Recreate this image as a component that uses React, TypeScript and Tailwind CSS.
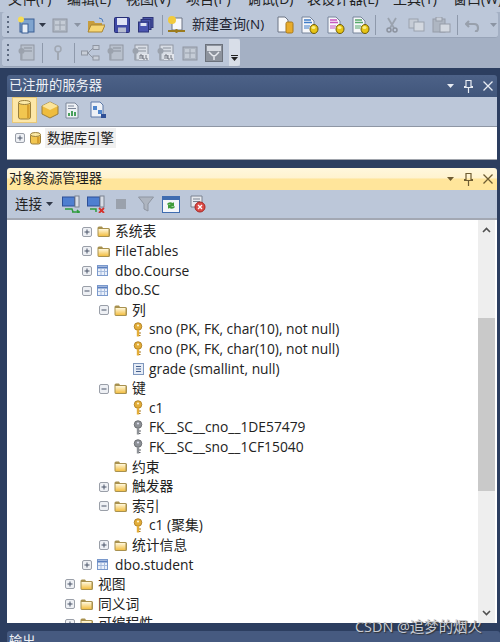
import type { ReactNode } from 'react'

const uiFont = { fontFamily: '"Open Sans", "Noto Sans CJK SC", sans-serif' }

function Svg({ w = 18, h = 18, className = '', children }: { w?: number; h?: number; className?: string; children: ReactNode }) {
  return (
    <svg width={w} height={h} viewBox={`0 0 ${w} ${h}`} className={`shrink-0 ${className}`}>
      {children}
    </svg>
  )
}

function PlusBox({ minus = false }: { minus?: boolean }) {
  return (
    <Svg w={10} h={10}>
      <rect x="0.500" y="0.500" width="9" height="9" rx="1.500" fill="#eef0f4" stroke="#9a9fa8" />
      <path d="M2.500 5h5" stroke="#4a5568" strokeWidth="1" />
      {!minus && <path d="M5 2.500v5" stroke="#4a5568" strokeWidth="1" />}
    </Svg>
  )
}

function Folder() {
  return (
    <Svg w={13} h={11}>
      <defs>
        <linearGradient id="folderFill" x1="0" y1="0" x2="0" y2="1">
          <stop offset="0" stopColor="#fff8dc" />
          <stop offset="1" stopColor="#f3bf45" />
        </linearGradient>
      </defs>
      <path d="M0.500 2q0-1.500 1.500-1.500h3l1 1.500h5.500q1.500 0 1.500 1.500v6q0 1.500-1.500 1.500h-9q-2 0-2-1.500z" fill="#a8914f" />
      <rect x="1.500" y="3" width="10" height="7" fill="url(#folderFill)" />
    </Svg>
  )
}

function TableIcon() {
  return (
    <Svg w={11} h={11}>
      <rect x="0.500" y="0.500" width="10" height="10" fill="#eaf0fa" stroke="#7a99cc" />
      <path d="M0.500 2.500h10" stroke="#5b7fbe" strokeWidth="2" />
      <path d="M4 3.500v6.500M7.500 3.500v6.500M1 6.500h9" stroke="#a6bbdd" />
    </Svg>
  )
}

function ColumnIcon() {
  return (
    <Svg w={11} h={12}>
      <rect x="0.500" y="0.500" width="10" height="11" fill="#e6ecf6" stroke="#7f97bd" />
      <path d="M3 3.500h5M3 6h5M3 8.500h5" stroke="#46618f" />
    </Svg>
  )
}

function Key({ gray = false }: { gray?: boolean }) {
  const fill = gray ? '#8d9196' : '#e3ad38'
  const dark = gray ? '#5e6166' : '#a7771c'
  return (
    <Svg w={10} h={16}>
      <circle cx="5" cy="4.500" r="3.800" fill={fill} stroke={dark} strokeWidth="0.800" />
      <circle cx="5" cy="3.500" r="1.100" fill={gray ? '#dde' : '#fff3c8'} />
      <path d="M5 8v6.500" stroke={fill} strokeWidth="2.400" />
      <path d="M6 11h2M6 13.500h1.500" stroke={dark} />
    </Svg>
  )
}

function Cylinder({ w = 12, h = 14 }: { w?: number; h?: number }) {
  return (
    <Svg w={w} h={h}>
      <rect x="0.500" y="2" width={w - 1} height={h - 3} rx="2" fill="#f2c650" stroke="#9a7f3c" />
      <ellipse cx={w / 2} cy="2.500" rx={w / 2 - 0.500} ry="2" fill="#fbe9a6" stroke="#9a7f3c" />
      <rect x={w - 4} y="5" width="2.500" height={h - 7} fill="#d79f2e" />
    </Svg>
  )
}

function Coin() {
  return (
    <>
      <ellipse cx="14" cy="13" rx="4" ry="4.500" fill="#e7c414" stroke="#6f5c08" />
      <ellipse cx="13.500" cy="11.500" rx="2" ry="1.500" fill="#fbef84" />
    </>
  )
}

function DocCoin({ color }: { color: string }) {
  return (
    <Svg w={19} h={18}>
      <path d="M2 1h8l4 4v12H2z" fill="#f6f7fa" stroke="#77849a" />
      <path d="M4 4h7M4 6.500h8" stroke={color} strokeWidth="1.500" />
      <path d="M4 10h6M4 12h5" stroke={color} />
      <Coin />
    </Svg>
  )
}

function DropArrow({ color = '#303848' }: { color?: string }) {
  return (
    <Svg w={7} h={4}>
      <path d="M0 0h7L3.500 4z" fill={color} />
    </Svg>
  )
}

function Grip() {
  return (
    <div className="flex w-[2px] flex-col gap-[3px]">
      {[0, 1, 2, 3].map(i => (
        <div key={i} className="h-[2px] w-[2px] bg-[#5d6a80]" />
      ))}
    </div>
  )
}

function Sep() {
  return <div className="h-[20px] w-[1px] bg-[#8e99ab]" />
}

function GrayBox({ w = 18 }: { w?: number }) {
  return (
    <Svg w={w} h={18}>
      <rect x="2" y="3" width={w - 4} height="13" fill="#aeb6c2" stroke="#8f96a2" />
      <rect x="4" y="5" width={w - 8} height="9" fill="#c5ccd6" />
      <path d={`M4 9h${w - 8}M${w / 2} 5v9`} stroke="#98a0ac" />
    </Svg>
  )
}

function GrayKeyDoc({ label }: { label?: boolean }) {
  return (
    <Svg w={19} h={18}>
      <rect x="4" y="1" width="13" height="15" fill={label ? '#d8dde5' : '#b8c0cc'} stroke="#8f96a2" />
      <path d="M7 4h8M7 7h8" stroke="#8a919c" />
      <circle cx="4.500" cy="7" r="3" fill="#9ba2ad" />
      <path d="M4.500 10v6" stroke="#9ba2ad" strokeWidth="2" />
      {label && <rect x="8" y="10" width="10" height="6" fill="#e3e6ec" />}
      {label && <path d="M9 15v-4h2v4M12 11v4h2M15 11v4h2" stroke="#555c68" fill="none" strokeWidth="0.800" />}
    </Svg>
  )
}

function Toolbars() {
  return (
    <div className="bg-[#a4b0c4]">
      <div className="mx-[2px] flex h-[26px] items-center rounded-[3px] border-b border-[#98a4b8] bg-[#bcc7d9] pl-[5px]">
        <Grip />
        <Svg w={18} h={18} className="ml-[8px]">
          <rect x="3" y="3" width="14" height="13" fill="#7fa4cf" stroke="#3b5f94" />
          <rect x="5" y="8" width="6" height="9" fill="#e8eef6" stroke="#3b5f94" />
          <circle cx="4" cy="3.500" r="3" fill="#f6dc55" />
        </Svg>
        <div className="ml-[4px]"><DropArrow /></div>
        <div className="ml-[5px]"><GrayBox /></div>
        <div className="ml-[5px]"><DropArrow color="#8b94a3" /></div>
        <Svg w={18} h={16} className="ml-[6px]">
          <path d="M1 4h6l1 2h7v9H1z" fill="#c79d3d" />
          <path d="M4 8h14l-3 7H1z" fill="#f7d774" stroke="#a98532" />
          <path d="M12 1q4 0 4 4" stroke="#4d7cbd" fill="none" />
        </Svg>
        <Svg w={16} h={16} className="ml-[9px]">
          <rect x="0.500" y="0.500" width="15" height="15" rx="1" fill="#3f49a6" stroke="#262e75" />
          <rect x="3" y="1" width="10" height="7" fill="#dfe3f5" />
          <rect x="4" y="10.500" width="8" height="5" fill="#b6bcd0" />
        </Svg>
        <Svg w={16} h={16} className="ml-[8px]">
          <rect x="5" y="0.500" width="10" height="10" fill="#4a54a8" stroke="#2c3478" />
          <rect x="3" y="2.500" width="10" height="10" fill="#4a54a8" stroke="#2c3478" />
          <rect x="0.500" y="5" width="10" height="10" fill="#4a54b0" stroke="#2c3478" />
          <rect x="2.500" y="6" width="6" height="3" fill="#dfe3f5" />
        </Svg>
        <div className="ml-[8px]"><Sep /></div>
        <Svg w={19} h={19} className="ml-[4px]">
          <path d="M5 3h10v12H5z" fill="#f7f8fb" stroke="#6c7484" />
          <circle cx="5" cy="5" r="4" fill="#f2ca3c" />
          <path d="M1 16h17" stroke="#9b7b1e" strokeWidth="2" />
          <path d="M9.500 14v4" stroke="#9b7b1e" strokeWidth="2" />
        </Svg>
        <span className="ml-[6px] w-[84px] whitespace-nowrap text-[13.500px] text-[#1c2230]" style={uiFont}>新建查询(N)</span>
        <Svg w={18} h={18}>
          <path d="M2 1h7l3 3v12H2z" fill="#f7f8fb" stroke="#6c7484" />
          <rect x="10" y="6" width="7" height="11" rx="1.500" fill="#e8ac2c" stroke="#a8791a" />
        </Svg>
        <div className="ml-[6px]"><DocCoin color="#3f7cc8" /></div>
        <div className="ml-[7px]"><DocCoin color="#c857c0" /></div>
        <div className="ml-[6px]"><DocCoin color="#55a86a" /></div>
        <div className="ml-[5px]"><Sep /></div>
        <Svg w={14} h={16} className="ml-[9px]">
          <path d="M3 1l6 10M11 1L5 11" stroke="#9aa2ae" strokeWidth="1.800" />
          <circle cx="4" cy="13" r="2" fill="none" stroke="#8b929e" strokeWidth="1.500" />
          <circle cx="10" cy="13" r="2" fill="none" stroke="#8b929e" strokeWidth="1.500" />
        </Svg>
        <Svg w={17} h={14} className="ml-[9px]">
          <rect x="1" y="1" width="9" height="9" fill="#c6ccd6" stroke="#9aa2ae" />
          <rect x="6" y="4" width="10" height="9" fill="#d3d8e0" stroke="#9aa2ae" />
        </Svg>
        <Svg w={19} h={16} className="ml-[7px]">
          <rect x="1" y="2" width="12" height="13" fill="#aeb6c2" stroke="#959ca8" />
          <rect x="4" y="0" width="6" height="4" fill="#c8ced8" stroke="#959ca8" />
          <rect x="8" y="7" width="10" height="8" fill="#d3d8e0" stroke="#959ca8" />
        </Svg>
        <div className="ml-[6px]"><Sep /></div>
        <Svg w={15} h={14} className="ml-[7px]">
          <path d="M4 3L1 6l3 3M2 6h7q4 0 4 4t-3 3" fill="none" stroke="#98a0ac" strokeWidth="2.200" />
        </Svg>
        <div className="ml-[10px]"><DropArrow color="#8b94a3" /></div>
      </div>
      <div className="ml-[2px] mt-[1px] flex h-[28px] w-[238px] items-center rounded-l-[3px] border-b border-[#98a4b8] bg-[#bcc7d9] pl-[5px]">
        <Grip />
        <div className="ml-[8px]"><GrayKeyDoc /></div>
        <div className="ml-[6px]"><Sep /></div>
        <Svg w={10} h={16} className="ml-[10px]">
          <circle cx="5" cy="4" r="3" fill="none" stroke="#a0a7b2" strokeWidth="1.500" />
          <path d="M5 7v8" stroke="#a0a7b2" strokeWidth="2" />
        </Svg>
        <div className="ml-[11px]"><Sep /></div>
        <Svg w={19} h={16} className="ml-[6px]">
          <rect x="0.500" y="6" width="6" height="4" fill="#c8ced8" stroke="#8f96a2" />
          <rect x="12" y="0.500" width="6" height="4" fill="#c8ced8" stroke="#8f96a2" />
          <rect x="12" y="11" width="6" height="4" fill="#c8ced8" stroke="#8f96a2" />
          <path d="M7 8l5-5M7 8l5 5" stroke="#8f96a2" />
        </Svg>
        <div className="ml-[6px]"><GrayKeyDoc /></div>
        <div className="ml-[6px]"><GrayKeyDoc label /></div>
        <div className="ml-[6px]"><GrayKeyDoc label /></div>
        <div className="ml-[6px]"><GrayBox /></div>
        <Svg w={18} h={18} className="ml-[6px]">
          <rect x="0.500" y="0.500" width="17" height="17" fill="#8d939d" stroke="#6c727c" />
          <rect x="2" y="2" width="14" height="5" fill="#d6dae1" />
          <path d="M4 8l4 4M14 8l-4 4M9 11v5" stroke="#e6e9ee" strokeWidth="1.500" />
        </Svg>
        <div className="ml-auto flex h-full w-[11px] flex-col items-center justify-end gap-[1px] rounded-r-[3px] bg-[#d8dee8] pb-[5px]">
          <div className="h-[1px] w-[7px] bg-[#222]" />
          <DropArrow color="#222" />
        </div>
      </div>
      <div className="h-[1px]" />
    </div>
  )
}

function HeaderControls({ color }: { color: string }) {
  return (
    <div className="ml-auto flex items-center gap-[10px] pr-[4px]">
      <DropArrow color={color} />
      <Svg w={9} h={13}>
        <path d="M2 0.500h5v6h1.500v1h-8v-1H2zM4.500 8v5" fill="none" stroke={color} strokeWidth="1.200" />
      </Svg>
      <Svg w={10} h={10}>
        <path d="M0.500 0.500l9 9M9.500 0.500l-9 9" stroke={color} strokeWidth="1.300" />
      </Svg>
    </div>
  )
}

function ServerPanel() {
  return (
    <section className="overflow-hidden rounded-t-[3px]">
      <div className="flex h-[22px] items-center bg-gradient-to-b from-[#4d6288] to-[#41567b] pl-[2px] text-[13.300px] text-[#eef1f6]">
        已注册的服务器
        <HeaderControls color="#e8ecf3" />
      </div>
      <div className="flex h-[30px] items-center border-b border-[#8e96a4] bg-[#bcc7d9] pl-[5px]">
        <div className="mb-[3px] flex h-[26px] w-[25px] items-center justify-center border border-[#e8c878] bg-[#fde7a8]">
          <Cylinder w={13} h={20} />
        </div>
        <Svg w={18} h={18} className="ml-[4px] mb-[3px]">
          <path d="M9 1l8 4v8l-8 4-8-4V5z" fill="#eebc3e" stroke="#9a7f3c" />
          <path d="M1 5l8 4 8-4-8-4z" fill="#fbe49a" />
        </Svg>
        <Svg w={14} h={17} className="ml-[6px] mb-[3px]">
          <path d="M1 1h9l3 3v12H1z" fill="#eef1f6" stroke="#7d8799" />
          <path d="M3 4h6M3 6.500h8" stroke="#7d8799" />
          <path d="M4 14v-3M7 14V9M10 14v-4" stroke="#4aa05c" strokeWidth="2" />
        </Svg>
        <Svg w={17} h={18} className="ml-[11px] mb-[3px]">
          <path d="M1 1h9l3 3v12H1z" fill="#eef1f6" stroke="#5c79a8" />
          <rect x="3" y="5" width="4" height="4" fill="#4f85cc" />
          <rect x="8" y="9" width="4" height="4" fill="#4f85cc" />
          <rect x="11" y="13" width="5" height="4" fill="#2f4f96" />
        </Svg>
      </div>
      <div className="h-[33px] border-b border-[#a0a4ac] bg-white pl-[8px] pt-[1px]">
        <div className="flex h-[20px] items-center">
          <PlusBox />
          <div className="ml-[5px]"><Cylinder w={11} h={13} /></div>
          <span className="ml-[4px] bg-[#f0f0f0] px-[2px] text-[13.400px] leading-[20px] text-[#222]">数据库引擎</span>
        </div>
      </div>
    </section>
  )
}

function Row({ pad, box, icon, text }: { pad: string; box?: 'plus' | 'minus'; icon: ReactNode; text: string }) {
  return (
    <div className={`flex h-[19.6px] items-center whitespace-nowrap ${pad}`}>
      <div className="flex w-[15px] shrink-0 items-center">
        {box && <PlusBox minus={box === 'minus'} />}
      </div>
      <div className="flex w-[18px] shrink-0 items-center">{icon}</div>
      <span className="text-[13.800px] text-[#222]">{text}</span>
    </div>
  )
}

function LeafRow({ icon, text }: { icon: ReactNode; text: string }) {
  return (
    <div className="flex h-[19.6px] items-center whitespace-nowrap pl-[126px]">
      <div className="flex w-[16px] shrink-0 items-center">{icon}</div>
      <span className="text-[13.800px] text-[#222]">{text}</span>
    </div>
  )
}

function ExplorerPanel() {
  return (
    <section className="mt-[8px] overflow-hidden rounded-t-[3px]">
      <div className="flex h-[22px] items-center bg-[linear-gradient(#fff7dd_0%,#fff3cf_45%,#ffe59b_50%,#ffe59b_100%)] pl-[2px] text-[13.300px] text-[#1d1d1d]">
        对象资源管理器
        <HeaderControls color="#6e5c32" />
      </div>
      <div className="flex h-[30px] items-center border-b-2 border-[#a3a8b3] bg-[#bcc7d9] pl-[8px]">
        <span className="text-[13.500px] text-[#222]">连接</span>
        <div className="ml-[4px]"><DropArrow /></div>
        <Svg w={19} h={18} className="ml-[9px]">
          <rect x="0.500" y="2" width="12" height="9" fill="#4f7fd0" stroke="#2d4f96" />
          <rect x="13" y="1" width="4" height="11" fill="#d8dde6" stroke="#7a8290" />
          <path d="M3 14h7l1 3M10 17h8M15 15l2 2-2 2" stroke="#2e9c3c" strokeWidth="1.500" fill="none" />
        </Svg>
        <Svg w={19} h={18} className="ml-[6px]">
          <rect x="0.500" y="2" width="12" height="9" fill="#4f7fd0" stroke="#2d4f96" />
          <rect x="13" y="1" width="4" height="11" fill="#d8dde6" stroke="#7a8290" />
          <path d="M3 14h6v3" stroke="#2e9c3c" strokeWidth="1.500" fill="none" />
          <path d="M12 13l5 5M17 13l-5 5" stroke="#d5322c" strokeWidth="1.800" />
        </Svg>
        <div className="ml-[10px] h-[10px] w-[10px] bg-[#9aa1ac]" />
        <Svg w={16} h={16} className="ml-[12px]">
          <path d="M0.500 1h15L10 8v7l-4-2V8z" fill="#aeb5c0" stroke="#8e95a1" />
        </Svg>
        <Svg w={18} h={17} className="ml-[8px]">
          <rect x="0.500" y="0.500" width="17" height="16" fill="#f4f6fa" stroke="#3f6cb0" />
          <rect x="1" y="1" width="16" height="3" fill="#3f6cb0" />
          <path d="M5 8q2-3 6-1l1-1v4H8l1-1q-2-1-3 0zM13 11q-2 3-6 1l-1 1V9h4l-1 1q2 1 3 0z" fill="#3f9c3a" />
        </Svg>
        <Svg w={18} h={18} className="ml-[8px]">
          <path d="M3 1h11v11H3z" fill="#e6e9ee" stroke="#7a8290" />
          <path d="M5 4h7M5 6.500h7" stroke="#7a8290" />
          <circle cx="12" cy="12" r="5" fill="#dc4a46" stroke="#a52824" />
          <path d="M10 10l4 4M14 10l-4 4" stroke="#fff" strokeWidth="1.300" />
        </Svg>
      </div>
      <div className="flex h-[403px] overflow-hidden bg-white pr-[2px]">
        <div className="min-w-0 flex-1 overflow-hidden pt-[2px]">
          <Row pad="pl-[75px]" box="plus" icon={<Folder />} text="系统表" />
          <Row pad="pl-[75px]" box="plus" icon={<Folder />} text="FileTables" />
          <Row pad="pl-[75px]" box="plus" icon={<TableIcon />} text="dbo.Course" />
          <Row pad="pl-[75px]" box="minus" icon={<TableIcon />} text="dbo.SC" />
          <Row pad="pl-[92px]" box="minus" icon={<Folder />} text="列" />
          <LeafRow icon={<Key />} text="sno (PK, FK, char(10), not null)" />
          <LeafRow icon={<Key />} text="cno (PK, FK, char(10), not null)" />
          <LeafRow icon={<ColumnIcon />} text="grade (smallint, null)" />
          <Row pad="pl-[92px]" box="minus" icon={<Folder />} text="键" />
          <LeafRow icon={<Key />} text="c1" />
          <LeafRow icon={<Key gray />} text="FK__SC__cno__1DE57479" />
          <LeafRow icon={<Key gray />} text="FK__SC__sno__1CF15040" />
          <Row pad="pl-[92px]" icon={<Folder />} text="约束" />
          <Row pad="pl-[92px]" box="plus" icon={<Folder />} text="触发器" />
          <Row pad="pl-[92px]" box="minus" icon={<Folder />} text="索引" />
          <LeafRow icon={<Key />} text="c1 (聚集)" />
          <Row pad="pl-[92px]" box="plus" icon={<Folder />} text="统计信息" />
          <Row pad="pl-[75px]" box="plus" icon={<TableIcon />} text="dbo.student" />
          <Row pad="pl-[58px]" box="plus" icon={<Folder />} text="视图" />
          <Row pad="pl-[58px]" box="plus" icon={<Folder />} text="同义词" />
          <Row pad="pl-[58px]" box="plus" icon={<Folder />} text="可编程性" />
        </div>
        <div className="flex w-[17px] shrink-0 flex-col items-center bg-[#eeeeee]">
          <Svg w={9} h={6} className="mt-[7px]">
            <path d="M1 5l3.500-3.500L8 5" fill="none" stroke="#505050" strokeWidth="1.600" />
          </Svg>
          <div className="mt-[85px] h-[173px] w-full bg-[#c9c9c9]" />
          <Svg w={9} h={6} className="mt-[119px]">
            <path d="M1 1l3.500 3.500L8 1" fill="none" stroke="#505050" strokeWidth="1.600" />
          </Svg>
        </div>
      </div>
    </section>
  )
}

export default function App() {
  return (
    <div className="relative flex h-[642px] w-[500px] flex-col overflow-hidden bg-[#2c3e60]" style={uiFont}>
      {/* Menu, only its lower part is on screen */}
      <div className="flex h-[12px] shrink-0 items-end overflow-hidden bg-[#bcc7d9] pb-[4px] pl-[8px] text-[14px] leading-[19px] text-[#222]">
        <span className="w-[59px] shrink-0">文件(F)</span>
        <span className="w-[59px] shrink-0">编辑(E)</span>
        <span className="w-[60px] shrink-0">视图(V)</span>
        <span className="w-[61px] shrink-0">项目(P)</span>
        <span className="w-[60px] shrink-0">调试(D)</span>
        <span className="w-[86px] shrink-0">表设计器(L)</span>
        <span className="w-[60px] shrink-0">工具(T)</span>
        <span className="shrink-0">窗口(W)</span>
      </div>
      <Toolbars />
      <div className="ml-[7px] mr-[3px] mt-[7px]">
        <ServerPanel />
        <ExplorerPanel />
      </div>
      <div className="ml-[7px] mt-[8px] h-[20px] shrink-0 rounded-t-[3px] bg-[#465a80] pl-[2px] text-[13.300px] leading-[20px] text-[#eef1f6]">输出</div>
      <span className="absolute left-[355px] top-[616px] text-[14.400px] text-[#c9ccd2] [text-shadow:1px_1px_1px_#333]">CSDN @追梦的烟火</span>
    </div>
  )
}
